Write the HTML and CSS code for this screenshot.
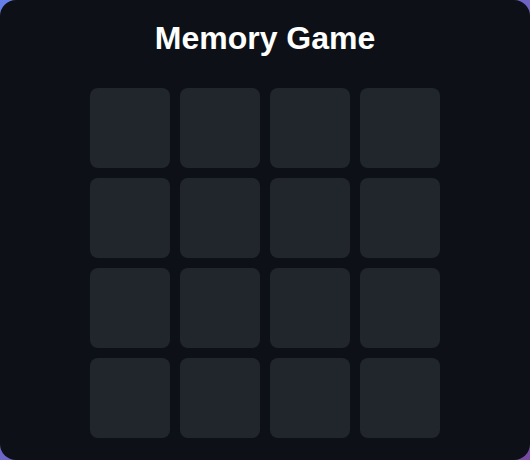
FILE: index.html
```html
<!DOCTYPE html>
<html>
<head>
<meta charset="utf-8">
<link rel="stylesheet" href="styles.css">
</head>
<body>
<div class="game">
  <h1 class="title">Memory Game</h1>
  <div class="board">
    <div class="card"></div><div class="card"></div><div class="card"></div><div class="card"></div>
    <div class="card"></div><div class="card"></div><div class="card"></div><div class="card"></div>
    <div class="card"></div><div class="card"></div><div class="card"></div><div class="card"></div>
    <div class="card"></div><div class="card"></div><div class="card"></div><div class="card"></div>
  </div>
</div>
</body>
</html>
```
FILE: styles.css
```css
html, body {
  margin: 0;
  padding: 0;
}
body {
  width: 530px;
  height: 460px;
  background: linear-gradient(135deg, #667eea 0%, #764ba2 100%);
  font-family: "Liberation Sans", Arial, sans-serif;
  overflow: hidden;
}
.game {
  box-sizing: border-box;
  width: 530px;
  height: 460px;
  background: #0d1117;
  border-radius: 16px;
  padding: 20px 0 0;
  display: flex;
  flex-direction: column;
  align-items: center;
}
.title {
  margin: 0 0 31px;
  font-size: 32px;
  line-height: 37px;
  font-weight: bold;
  color: #ffffff;
}
.board {
  display: grid;
  grid-template-columns: repeat(4, 80px);
  grid-auto-rows: 80px;
  gap: 10px;
}
.card {
  background: #21262d;
  border-radius: 8px;
}
```
